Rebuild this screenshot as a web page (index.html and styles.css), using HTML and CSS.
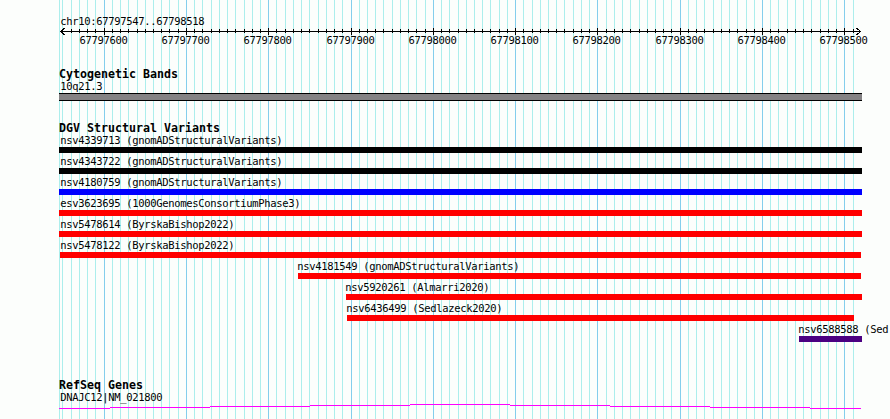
FILE: index.html
```
<!DOCTYPE html>
<html lang="en">
<head>
<meta charset="UTF-8">
<title>chr10:67797547..67798518</title>
<link rel="stylesheet" href="styles.css">
</head>
<body>
<div class="browser">
  <svg class="grid" id="grid" width="890" height="419"></svg>

  <div class="tracks">
    <div class="ruler">
      <div class="label">chr10:67797547..67798518</div>
      <svg class="axis" id="axis" width="830" height="8"></svg>
      <div class="scale" id="scale"></div>
    </div>

    <div class="track cyto">
      <h2>Cytogenetic Bands</h2>
      <div class="label">10q21.3</div>
      <div class="band"></div>
    </div>

    <div class="track variants">
      <h2>DGV Structural Variants</h2>
      <div id="variants"></div>
    </div>

    <div class="track genes">
      <h2>RefSeq Genes</h2>
      <div class="label">DNAJC12|NM_021800</div>
      <svg class="gene" width="803" height="6">
        <path d="M0 5.5H51M51 4.5H151M151 3.5H251M251 2.5H351M351 1.5H451M451 2.5H551M551 3.5H651M651 4.5H751M751 5.5H802"/>
      </svg>
    </div>
  </div>
</div>

<script src="script.js"></script>
</body>
</html>
```
FILE: styles.css
```
body {margin:0;background:#fcfefc;color:#000;overflow:hidden;}
.browser {position:relative;width:890px;height:419px;overflow:hidden;}
.grid {position:absolute;left:0;top:0;}
.minor {fill:#aceeec;}
.major {fill:#84ceec;}
svg {display:block;shape-rendering:crispEdges;}

.tracks {position:relative;box-sizing:border-box;padding:15px 0 0 59px;}
.label, .scale {
  font-family:"DejaVu Sans Mono","Liberation Mono",monospace;
  font-size:10.5px;
  line-height:12px;
  height:12px;
  letter-spacing:-0.32px;
  white-space:pre;
}
.label {padding-left:1px;text-indent:0.3px;}
h2 {
  margin:0;
  font:bold 11.63px/12px "DejaVu Sans Mono","Liberation Mono",monospace;
  height:12px;
  white-space:pre;
}

/* ruler */
.ruler {height:53px;}
.axis path {stroke:#000;fill:none;}
.scale {display:flex;margin:0 0 0 20.5px;line-height:10px;}
.scale span {flex:none;width:48px;}

/* tracks */
.cyto {height:54px;}
.band {
  box-sizing:border-box;
  width:803px;
  height:8px;
  margin-top:1px;
  background:#848284;
  border:solid #000;
  border-width:1px 0;
}
.variants {height:257px;}
.variant {height:21px;}
.bar {height:6px;margin-top:1px;}
.black {background:#000;}
.blue {background:#00f;}
.red {background:#f00;}
.indigo {background:#4b0082;}
.gene path {stroke:#f0f;fill:none;}
```
FILE: script.js
```
const START=59;
const STEP=8.2303;
const lineX=k=>Math.floor(104.1+STEP*k);

/* vertical grid and ruler ticks, one per 10 bp */
let lines=`<rect class="minor" x="${START}" y="0" width="1" height="419"/>`;
let ticks='M2 4.5H802M5.5 1L1.5 4.5L5.5 8M797.5 1L801.5 4.5L797.5 8';
for(let k=-5;k<=91;k++){
  const x=lineX(k), major=k%10===0;
  lines+=`<rect class="${major?'major':'minor'}" x="${x}" y="0" width="1" height="419"/>`;
  ticks+=major?`M${x-START+.5} 1V8`:`M${x-START+.5} 2V6`;
}
document.getElementById('grid').innerHTML=lines;
document.getElementById('axis').innerHTML=`<path d="${ticks}"/>`;

/* ruler numbers */
let scale='';
for(let i=0;i<10;i++){
  const gap=i?lineX(i*10)-lineX((i-1)*10)-48:0;
  scale+=`<span style="margin-left:${gap}px">${67797600+i*100}</span>`;
}
document.getElementById('scale').innerHTML=scale;

/* name, colour, bar start, bar end, text start */
const variants=[
  ['nsv4339713 (gnomADStructuralVariants)','black',59,862,60],
  ['nsv4343722 (gnomADStructuralVariants)','black',59,862,60],
  ['nsv4180759 (gnomADStructuralVariants)','blue',59,862,60],
  ['esv3623695 (1000GenomesConsortiumPhase3)','red',59,862,60],
  ['nsv5478614 (ByrskaBishop2022)','red',59,862,60],
  ['nsv5478122 (ByrskaBishop2022)','red',60,861,60],
  ['nsv4181549 (gnomADStructuralVariants)','red',298,861,297],
  ['nsv5920261 (Almarri2020)','red',346,862,345],
  ['nsv6436499 (Sedlazeck2020)','red',347,854,346],
  ['nsv6588588 (Sed','indigo',799,862,798]
];
document.getElementById('variants').innerHTML=variants.map(([name,color,from,to,text])=>
  `<div class="variant"><div class="label" style="padding-left:${text-START}px">${name}</div>`+
  `<div class="bar ${color}" style="margin-left:${from-START}px;width:${to-from}px"></div></div>`
).join('');
```
